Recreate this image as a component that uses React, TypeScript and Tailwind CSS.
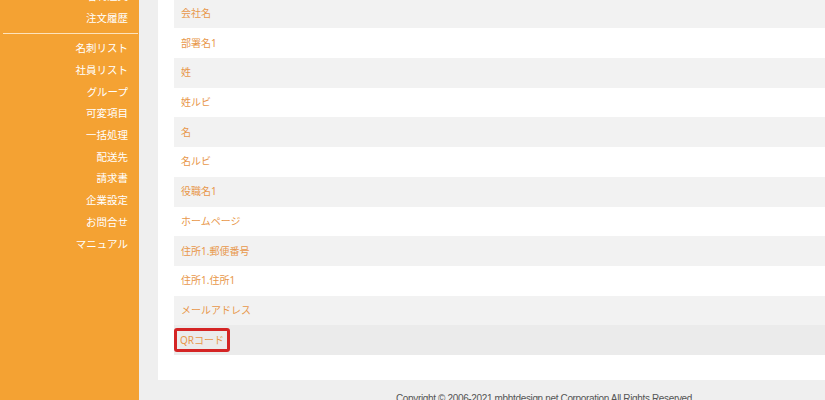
const menuTop = ["名刺注文", "注文履歴"];
const menuMain = [
  "名刺リスト",
  "社員リスト",
  "グループ",
  "可変項目",
  "一括処理",
  "配送先",
  "請求書",
  "企業設定",
  "お問合せ",
  "マニュアル",
];

const fields = [
  "会社名",
  "部署名1",
  "姓",
  "姓ルビ",
  "名",
  "名ルビ",
  "役職名1",
  "ホームページ",
  "住所1.郵便番号",
  "住所1.住所1",
  "メールアドレス",
];

const App = () => {
  return (
    <div
      className="h-[400px] w-[825px] overflow-hidden bg-[#efefef]"
      style={{ fontFamily: '"Noto Sans", "Noto Sans CJK JP", sans-serif' }}
    >
      <div className="flex -mt-[15px] min-h-[430px]">
        {/* sidebar */}
        <aside className="w-[139px] shrink-0 bg-[#f4a233] pt-[1px]">
          {menuTop.map((m) => (
            <div
              key={m}
              className="h-[21.7px] flex items-center justify-end pr-[11px] text-[10.5px] text-white"
            >
              {m}
            </div>
          ))}
          <div className="ml-[3px] mr-[1px] my-[4px] h-px bg-[#fde3bd]" />
          {menuMain.map((m) => (
            <div
              key={m}
              className="h-[21.7px] flex items-center justify-end pr-[11px] text-[10.5px] text-white"
            >
              {m}
            </div>
          ))}
        </aside>

        {/* content */}
        <main className="flex-1 pl-[19px]">
          <div className="bg-white pl-[16px] pt-[13.5px] pb-[25px]">
            {fields.map((f, i) => (
              <div
                key={f}
                className={`h-[29.73px] flex items-center pl-[7px] text-[10px] text-[#e8974a] ${
                  i % 2 === 0 ? "bg-[#f2f2f2]" : "bg-white"
                }`}
              >
                {f}
              </div>
            ))}
            <div className="h-[29.73px] flex items-center bg-[#ebebeb] text-[10px] text-[#e8974a]">
              <span className="inline-flex h-[24px] items-center rounded-[3px] border-[3px] border-[#d42424] px-[3px]">
                QRコード
              </span>
            </div>
          </div>
          <div className="pt-[11px] pl-[238px] text-[10px] tracking-[-0.35px] text-[#555555] whitespace-nowrap font-['Liberation_Sans',sans-serif]">
            Copyright © 2006-2021 mbhtdesign.net Corporation All Rights Reserved.
          </div>
        </main>
      </div>
    </div>
  );
};

export default App;
